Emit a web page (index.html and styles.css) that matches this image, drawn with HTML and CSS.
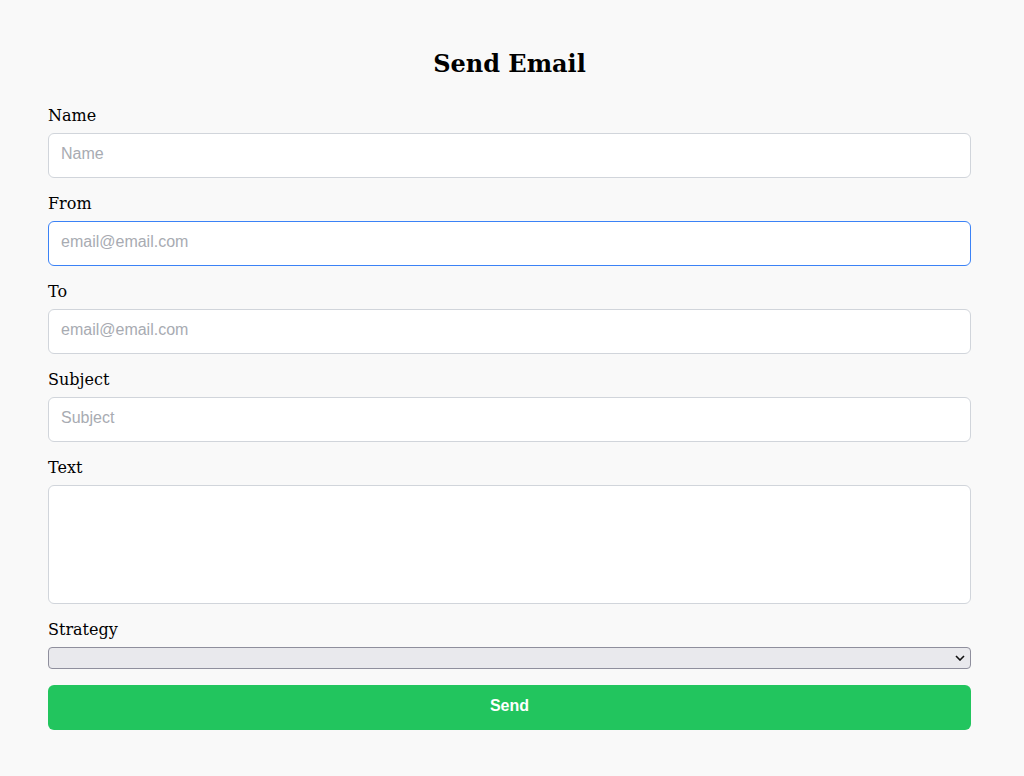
FILE: index.html
```html
<!DOCTYPE html>
<html lang="en">
<head>
<meta charset="utf-8">
<title>Send Email</title>
<link rel="stylesheet" href="styles.css">
</head>
<body>
<main class="page">
  <h1 class="title">Send Email</h1>
  <form class="form">
    <div class="field">
      <label class="label" for="name">Name</label>
      <input class="input" id="name" type="text" placeholder="Name">
    </div>
    <div class="field">
      <label class="label" for="from">From</label>
      <input class="input input-focus" id="from" type="email" placeholder="email@email.com">
    </div>
    <div class="field">
      <label class="label" for="to">To</label>
      <input class="input" id="to" type="email" placeholder="email@email.com">
    </div>
    <div class="field">
      <label class="label" for="subject">Subject</label>
      <input class="input" id="subject" type="text" placeholder="Subject">
    </div>
    <div class="field">
      <label class="label" for="text">Text</label>
      <textarea class="input textarea" id="text"></textarea>
    </div>
    <div class="field">
      <label class="label" for="strategy">Strategy</label>
      <select class="select" id="strategy"></select>
    </div>
    <button class="button" type="button">Send</button>
  </form>
</main>
</body>
</html>
```

FILE: styles.css
```css
html, body {
  margin: 0;
  padding: 0;
  background: #f9f9f9;
}

body {
  font-family: "DejaVu Serif", serif;
  color: #111;
}

.page {
  width: 923px;
  margin-left: 48px;
  padding-top: 50px;
}

.title {
  margin: 0 0 28px 0;
  font-size: 24px;
  line-height: 28px;
  font-weight: bold;
  text-align: center;
  color: #000;
}

.form {
  display: flex;
  flex-direction: column;
}

.field {
  display: flex;
  flex-direction: column;
  margin-bottom: 16px;
}

.label {
  font-size: 16px;
  line-height: 19px;
  margin-bottom: 8px;
  color: #000;
}

.input {
  box-sizing: border-box;
  width: 100%;
  height: 45px;
  padding: 0 12px 4px 12px;
  border: 1px solid #d1d5db;
  border-radius: 6px;
  background: #fff;
  font-family: "Liberation Sans", Arial, sans-serif;
  font-size: 16px;
  color: #111;
  outline: none;
}

.input::placeholder {
  color: #a8abb2;
}

.input-focus {
  border-color: #3b82f6;
}

.textarea {
  height: 119px;
  padding: 8px 12px;
  resize: none;
  display: block;
}

.select {
  box-sizing: border-box;
  width: 100%;
  height: 22px;
  -webkit-appearance: none;
  appearance: none;
  border: 1px solid #8f8f9d;
  border-radius: 4px;
  background-color: #e9e9ed;
  background-image: url("data:image/svg+xml;utf8,<svg xmlns='http://www.w3.org/2000/svg' width='10' height='6' viewBox='0 0 10 6'><path d='M1 1l4 4 4-4' fill='none' stroke='%23111' stroke-width='1.6'/></svg>");
  background-repeat: no-repeat;
  background-position: right 5px center;
  margin: 0;
}

.button {
  box-sizing: border-box;
  width: 100%;
  height: 45px;
  padding: 0 0 4px 0;
  border: none;
  border-radius: 6px;
  background: #22c55e;
  color: #fff;
  font-family: "Liberation Sans", Arial, sans-serif;
  font-size: 16px;
  font-weight: bold;
  cursor: pointer;
}
```
